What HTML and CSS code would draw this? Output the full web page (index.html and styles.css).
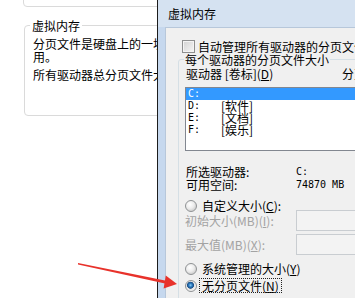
FILE: index.html
```html
<!DOCTYPE html>
<html lang="zh-CN">
<head>
<meta charset="utf-8">
<title>虚拟内存</title>
<link rel="stylesheet" href="styles.css">
</head>
<body>
<div class="page">
  <div class="card card-top"></div>
  <fieldset class="card vm">
    <legend>虚拟内存</legend>
    <p>分页文件是硬盘上的一块区域，Windows 当作 RAM 使<br>用。</p>
    <p>所有驱动器总分页文件大小: 2048 MB</p>
  </fieldset>
</div>

<div class="window">
  <div class="titlebar">虚拟内存</div>
  <div class="client">
    <div class="check-row"><span class="checkbox"></span><span>自动管理所有驱动器的分页文件大小(<u>A</u>)</span></div>
    <fieldset class="group">
      <legend>每个驱动器的分页文件大小</legend>
      <div class="list-head"><span class="col-drive">驱动器 [卷标](<u>D</u>)</span><span>分页文件大小(MB)</span></div>
      <ul class="listbox">
        <li class="sel"><span class="drv mono">C:</span></li>
        <li><span class="drv mono">D:</span><span>[软件]</span></li>
        <li><span class="drv mono">E:</span><span>[文档]</span></li>
        <li><span class="drv mono">F:</span><span>[娱乐]</span></li>
      </ul>
      <div class="info first"><span class="k">所选驱动器:</span><span class="mono">C:</span></div>
      <div class="info"><span class="k">可用空间:</span><span class="mono">74870 MB</span></div>
      <div class="radio-row custom"><span class="radio"></span><span>自定义大小(<u>C</u>):</span></div>
      <div class="field-row first-field"><span class="k disabled">初始大小(MB)(<u>I</u>):</span><span class="textbox"></span></div>
      <div class="field-row second-field"><span class="k disabled">最大值(MB)(<u>X</u>):</span><span class="textbox"></span></div>
      <div class="radio-row sys"><span class="radio"></span><span>系统管理的大小(<u>Y</u>)</span></div>
      <div class="radio-row none"><span class="radio checked"></span><span class="focus">无分页文件(<u>N</u>)</span></div>
    </fieldset>
  </div>
</div>

<svg class="arrow" width="355" height="298" viewBox="0 0 355 298" aria-hidden="true">
  <polygon points="78,263 78,264.6 165,283.6 165,280.6" fill="#e8322b"/>
  <polygon points="165.8,275.6 177,284 163.6,288.6" fill="#e8322b"/>
</svg>
</body>
</html>
```
FILE: styles.css
```css
html, body {
  margin: 0;
  height: 100%;
  overflow: hidden;
  background: #ffffff;
}

body {
  position: relative;
  font-family: "Noto Sans CJK SC", "Noto Sans", sans-serif;
  font-size: 12px;
  line-height: 13px;
  color: #000000;
}

u { text-decoration: underline; text-underline-offset: 1px; }

.mono {
  font-family: "DejaVu Sans Mono", "Liberation Mono", monospace;
  font-size: 10px;
}

/* ---------- background page ---------- */
.page {
  padding-left: 23px;
}

.card {
  border: 1px solid #dadada;
  border-radius: 4px;
  width: 320px;
}

.card-top {
  margin-top: -20px;
  height: 25px;
}

.vm {
  margin: 12px 0 0 1px;
  padding: 5px 8px 34px 8px;
  width: 300px;
  min-width: 0;
}

.vm legend {
  margin-left: -3px;
  padding: 0 2px;
  line-height: 13px;
}

.vm p {
  margin: 0;
  white-space: nowrap;
}

.vm p + p {
  margin-top: 5px;
}

/* ---------- dialog window ---------- */
.window {
  position: absolute;
  left: 157px;
  top: -6px;
  width: 260px;
  height: 330px;
  box-sizing: border-box;
  border-left: 1px solid #1c1c1c;
  padding-left: 7px;
  background: #c6d8ee;
  overflow: hidden;
}

.titlebar {
  margin-left: -7px;
  padding: 13px 0 6px 10px;
  line-height: 14px;
  background: #d5e2f1;
  white-space: nowrap;
}

.client {
  height: 320px;
  padding-top: 12px;
  box-sizing: border-box;
  background: #f0f0f0;
  border-top: 1px solid #b7c7da;
  border-left: 1px solid #b7c7da;
}

.check-row {
  display: flex;
  align-items: center;
  gap: 3px;
  padding-left: 16px;
  height: 13px;
  white-space: nowrap;
}

.checkbox {
  flex: none;
  width: 11px;
  height: 11px;
  border: 1px solid #8e8f8f;
  background: linear-gradient(135deg, #d2d2d2, #f6f6f6);
  box-shadow: inset 0 0 0 1px #f4f4f4;
}

.group {
  margin: 0 0 0 12px;
  padding: 0 0 0 6px;
  border: 1px solid #d5dfe5;
  border-radius: 3px;
  min-width: 0;
  height: 400px;
  box-sizing: border-box;
}

.group legend {
  margin-left: -1px;
  padding: 0 1px;
  line-height: 13px;
  white-space: nowrap;
}

.list-head {
  display: flex;
  margin-top: 1px;
  padding-left: 1px;
  white-space: nowrap;
}

.col-drive {
  flex: none;
  width: 156px;
}

.listbox {
  list-style: none;
  margin: 7px 0 0 0;
  padding: 0;
  width: 220px;
  height: 62px;
  border: 1px solid #828790;
  background: #ffffff;
}

.listbox li {
  display: flex;
  align-items: center;
  height: 12px;
  line-height: 12px;
  padding-left: 2px;
  white-space: nowrap;
}

.listbox li.sel {
  background: #3399ff;
  color: #ffffff;
}

.drv {
  flex: none;
  width: 33px;
}

.info {
  display: flex;
  align-items: center;
  height: 13px;
  padding-left: 1px;
  white-space: nowrap;
}

.info.first {
  margin-top: 14px;
}

.info .k {
  flex: none;
  width: 110px;
}

.radio-row {
  display: flex;
  align-items: center;
  gap: 5px;
  height: 13px;
  white-space: nowrap;
}

.radio-row.custom { margin-top: 8px; }
.radio-row.sys { margin-top: 7px; }
.radio-row.none { margin-top: 4px; }

.radio {
  flex: none;
  width: 10px;
  height: 10px;
  border: 1px solid #8f9294;
  border-radius: 50%;
  background: radial-gradient(circle at 40% 35%, #ffffff 0, #ececec 4px, #d6d6d6 6px);
}

.radio.checked {
  background: radial-gradient(circle at 45% 42%, #8fd0f4 0, #2f7fc4 1.6px, #1b4f86 3.2px, #e4e4e4 3.8px, #f4f4f4 6px);
}

.focus {
  margin-left: -2px;
  padding: 0 2px;
  outline: 1px dotted #222222;
}

.field-row {
  display: flex;
  align-items: center;
  height: 21px;
  white-space: nowrap;
}

.field-row.first-field { margin-top: -2px; }
.field-row.second-field { margin-top: 3px; }

.field-row .k {
  flex: none;
  width: 111px;
}

.disabled {
  color: #a3a3a3;
}

.textbox {
  flex: none;
  width: 100px;
  height: 19px;
  border: 1px solid #c9cdd1;
  background: #f3f3f3;
}

/* ---------- annotation arrow ---------- */
.arrow {
  position: absolute;
  left: 0;
  top: 0;
  pointer-events: none;
}
```
